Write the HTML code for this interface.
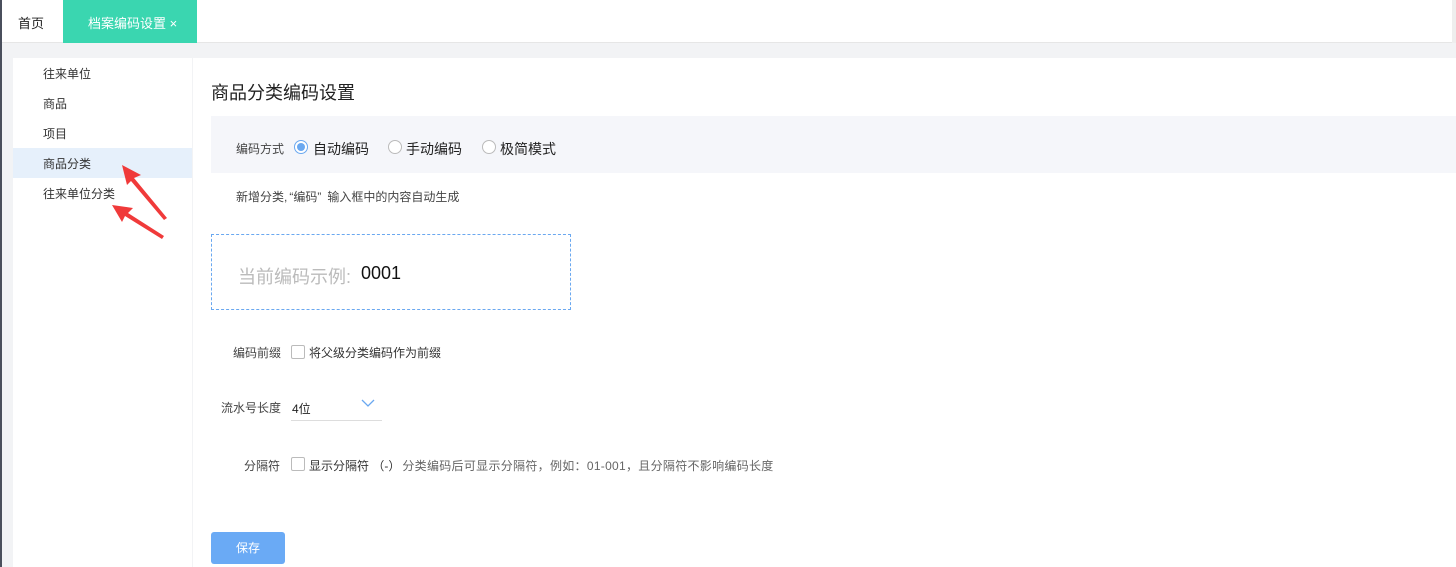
<!DOCTYPE html><html><head><meta charset="utf-8"><style>
*{margin:0;padding:0;box-sizing:border-box}
body{width:1456px;height:567px;overflow:hidden;background:#f2f3f5;font-family:"Liberation Sans","Noto Sans CJK SC",sans-serif;color:#333;position:relative}
.a{position:absolute}
.t{font-size:12px;white-space:nowrap}
</style></head><body>
<div class="a" style="left:0;top:0;width:1456px;height:43px;background:#fff;border-bottom:1px solid #e6e6e6"></div>
<div class="a" style="left:0;top:0;width:2px;height:567px;background:#4a4f5c"></div>
<div class="a" style="left:1452px;top:0;width:4px;height:43px;background:#eee"></div>
<div class="a t" style="left:18px;top:13px;font-size:13px;color:#222">首页</div>
<div class="a" style="left:63px;top:0;width:134px;height:43px;background:#3ad6b0"></div>
<div class="a t" style="left:88px;top:13px;font-size:13px;color:#fff">档案编码设置 ×</div>
<div class="a" style="left:13px;top:58px;width:179px;height:509px;background:#fff"></div>
<div class="a" style="left:193px;top:58px;width:1263px;height:509px;background:#fff"></div>
<div class="a" style="left:13px;top:148px;width:179px;height:30px;background:#e6f0fb"></div>
<div class="a t" style="left:43px;top:65px">往来单位</div>
<div class="a t" style="left:43px;top:95px">商品</div>
<div class="a t" style="left:43px;top:125px">项目</div>
<div class="a t" style="left:43px;top:155px">商品分类</div>
<div class="a t" style="left:43px;top:185px">往来单位分类</div>
<svg class="a" style="left:0;top:0" width="200" height="250"><polygon points="122,165 141,175 134,178 167,218 164,220 131,181 127,185" fill="#f03a3a"/><polygon points="112,205 133,208 128,213 164,236 162,239 125,216 122,222" fill="#f03a3a"/></svg>
<div class="a" style="left:211px;top:79px;font-size:18px;color:#222">商品分类编码设置</div>
<div class="a" style="left:211px;top:116px;width:1245px;height:57px;background:#f5f6fa"></div>
<div class="a t" style="left:236px;top:140px;color:#444">编码方式</div>
<div class="a" style="left:294px;top:140px;width:14px;height:14px;border-radius:50%;border:1px solid #6aa8f0;background:#fff"><div style="margin:2px;width:8px;height:8px;border-radius:50%;background:#6aa8f0"></div></div>
<div class="a t" style="left:313px;top:139px;font-size:14px;color:#222">自动编码</div>
<div class="a" style="left:388px;top:140px;width:14px;height:14px;border-radius:50%;border:1px solid #bbb;background:#fff"></div>
<div class="a t" style="left:406px;top:139px;font-size:14px;color:#222">手动编码</div>
<div class="a" style="left:482px;top:140px;width:14px;height:14px;border-radius:50%;border:1px solid #bbb;background:#fff"></div>
<div class="a t" style="left:500px;top:139px;font-size:14px;color:#222">极简模式</div>
<div class="a t" style="left:236px;top:188px;color:#444">新增分类,<span style="margin-left:2px">“编码”</span><span style="margin-left:6px">输入框中的内容自动生成</span></div>
<div class="a" style="left:211px;top:234px;width:360px;height:76px;border:1px dashed #6aa8f0"></div>
<div class="a t" style="left:238px;top:263px;font-size:18px;color:#bbb">当前编码示例:</div>
<div class="a t" style="left:361px;top:263px;font-size:18px;color:#111">0001</div>
<div class="a t" style="left:233px;top:344px;color:#444">编码前缀</div>
<div class="a" style="left:291px;top:345px;width:14px;height:14px;border:1px solid #bbb;border-radius:2px"></div>
<div class="a t" style="left:309px;top:344px;color:#333">将父级分类编码作为前缀</div>
<div class="a t" style="left:221px;top:399px;color:#444">流水号长度</div>
<div class="a t" style="left:292px;top:400px;color:#222">4位</div>
<svg class="a" style="left:361px;top:399px" width="14" height="9"><path d="M1 1 L7 7 L13 1" fill="none" stroke="#6aa8f0" stroke-width="1.3"/></svg>
<div class="a" style="left:291px;top:420px;width:91px;height:1px;background:#ddd"></div>
<div class="a t" style="left:244px;top:457px;color:#444">分隔符</div>
<div class="a" style="left:291px;top:457px;width:14px;height:14px;border:1px solid #bbb;border-radius:2px"></div>
<div class="a t" style="left:309px;top:457px;color:#333">显示分隔符 （-）<span style="color:#666;margin-left:2px;letter-spacing:0.3px">分类编码后可显示分隔符，例如：01-001，且分隔符不影响编码长度</span></div>
<div class="a" style="left:211px;top:532px;width:74px;height:32px;background:#6aaaf5;border-radius:3px;color:#fff;font-size:12px;text-align:center;line-height:32px">保存</div>
</body></html>
